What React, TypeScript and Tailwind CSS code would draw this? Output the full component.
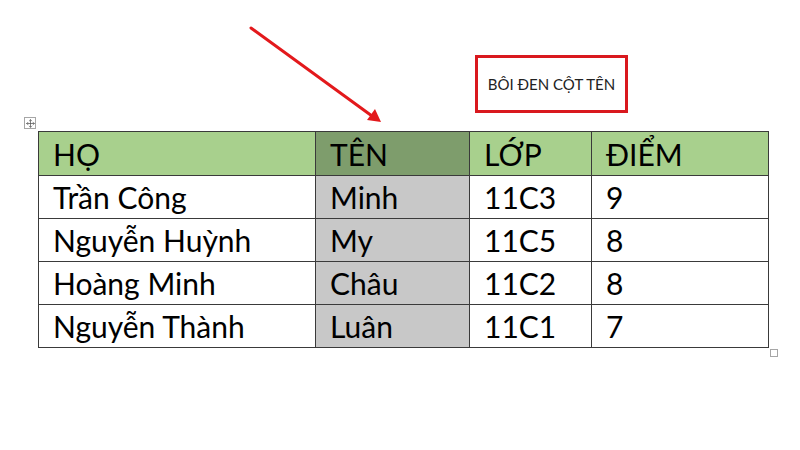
import { Move } from 'lucide-react';

const rows = [
  { ho: 'Trần Công', ten: 'Minh', lop: '11C3', diem: '9' },
  { ho: 'Nguyễn Huỳnh', ten: 'My', lop: '11C5', diem: '8' },
  { ho: 'Hoàng Minh', ten: 'Châu', lop: '11C2', diem: '8' },
  { ho: 'Nguyễn Thành', ten: 'Luân', lop: '11C1', diem: '7' },
];

export default function App() {
  return (
    <div
      className="relative w-[800px] h-[450px] bg-white overflow-hidden text-black"
      style={{ fontFamily: 'Lato, "Open Sans", sans-serif' }}
    >
      {/* Note box */}
      <div className="ml-[475px] mt-[55px] w-[153px] h-[58px] border-[3px] border-[#d9181e] flex items-center justify-center text-[15px] text-[#222]">
        BÔI ĐEN CỘT TÊN
      </div>

      {/* Table + handles */}
      <div className="relative ml-[38px] mt-[18px] w-[731px]">
        <div className="absolute -left-[14px] -top-[14px] w-[12px] h-[12px] border border-[#a6a6a6] bg-white flex items-center justify-center">
          <Move className="w-[9px] h-[9px] text-[#555]" strokeWidth={2} />
        </div>
        <table className="border-collapse text-[30px] leading-none">
          <colgroup>
            <col className="w-[277px]" />
            <col className="w-[154px]" />
            <col className="w-[122px]" />
            <col className="w-[177px]" />
          </colgroup>
          <thead>
            <tr className="h-[44px]">
              <th className="border border-[#3a3a3a] bg-[#a8d08d] text-left font-normal pl-[14px]">HỌ</th>
              <th className="border border-[#3a3a3a] bg-[#7e9d6c] text-left font-normal pl-[14px]">TÊN</th>
              <th className="border border-[#3a3a3a] bg-[#a8d08d] text-left font-normal pl-[14px]">LỚP</th>
              <th className="border border-[#3a3a3a] bg-[#a8d08d] text-left font-normal pl-[14px]">ĐIỂM</th>
            </tr>
          </thead>
          <tbody>
            {rows.map((r) => (
              <tr key={r.ho} className="h-[43px]">
                <td className="border border-[#3a3a3a] pl-[14px]">{r.ho}</td>
                <td className="border border-[#3a3a3a] bg-[#c8c8c8] pl-[14px]">{r.ten}</td>
                <td className="border border-[#3a3a3a] pl-[14px]">{r.lop}</td>
                <td className="border border-[#3a3a3a] pl-[14px]">{r.diem}</td>
              </tr>
            ))}
          </tbody>
        </table>
        <div className="absolute -right-[9px] -bottom-[9px] w-[8px] h-[8px] border border-[#a6a6a6] bg-white" />
      </div>

      {/* Arrow */}
      <svg className="absolute left-0 top-0" width="800" height="450">
        <line x1="251" y1="28" x2="372" y2="116" stroke="#e3191c" strokeWidth="3" strokeLinecap="round" />
        <polygon points="381,122 367,120 375,109" fill="#e3191c" />
      </svg>
    </div>
  );
}
